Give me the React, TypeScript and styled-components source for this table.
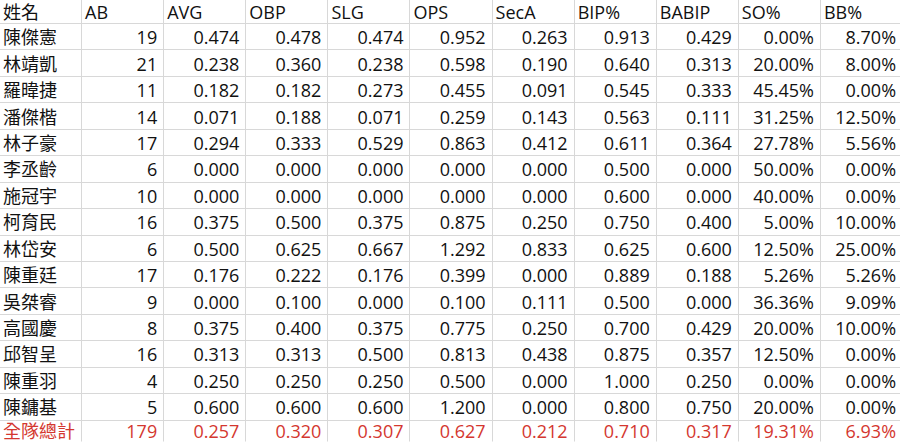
import React from 'react'
import styled, { createGlobalStyle } from 'styled-components'

const GlobalStyle = createGlobalStyle`
  html, body {
    margin: 0;
    padding: 0;
    background: #ffffff;
    overflow: hidden;
  }
`

const Sheet = styled.div`
  width: 900px;
  height: 442px;
  overflow: hidden;
  font-family: "Open Sans", "Noto Sans CJK TC", sans-serif;
  font-size: 18px;
  color: #111111;
`

const Row = styled.div<{ $header?: boolean; $total?: boolean }>`
  display: grid;
  grid-template-columns: repeat(11, 82.1px);
  height: ${p => (p.$header ? '24px' : p.$total ? '21px' : '26.45px')};
  color: ${p => (p.$total ? '#d4372f' : 'inherit')};
`

const Cell = styled.div<{ $right?: boolean; $last?: boolean }>`
  box-sizing: border-box;
  display: flex;
  align-items: center;
  justify-content: ${p => (p.$right ? 'flex-end' : 'flex-start')};
  padding: 1px ${p => (p.$right ? '6px' : '0')} 0 ${p => (p.$right ? '0' : '3px')};
  border-right: 1px solid #d8d8d8;
  border-bottom: 1px solid ${p => (p.$last ? 'transparent' : '#d8d8d8')};
  white-space: nowrap;
  line-height: 1;
`

const headers = ['姓名', 'AB', 'AVG', 'OBP', 'SLG', 'OPS', 'SecA', 'BIP%', 'BABIP', 'SO%', 'BB%']

const players: string[][] = [
  ['陳傑憲', '19', '0.474', '0.478', '0.474', '0.952', '0.263', '0.913', '0.429', '0.00%', '8.70%'],
  ['林靖凱', '21', '0.238', '0.360', '0.238', '0.598', '0.190', '0.640', '0.313', '20.00%', '8.00%'],
  ['羅暐捷', '11', '0.182', '0.182', '0.273', '0.455', '0.091', '0.545', '0.333', '45.45%', '0.00%'],
  ['潘傑楷', '14', '0.071', '0.188', '0.071', '0.259', '0.143', '0.563', '0.111', '31.25%', '12.50%'],
  ['林子豪', '17', '0.294', '0.333', '0.529', '0.863', '0.412', '0.611', '0.364', '27.78%', '5.56%'],
  ['李丞齡', '6', '0.000', '0.000', '0.000', '0.000', '0.000', '0.500', '0.000', '50.00%', '0.00%'],
  ['施冠宇', '10', '0.000', '0.000', '0.000', '0.000', '0.000', '0.600', '0.000', '40.00%', '0.00%'],
  ['柯育民', '16', '0.375', '0.500', '0.375', '0.875', '0.250', '0.750', '0.400', '5.00%', '10.00%'],
  ['林岱安', '6', '0.500', '0.625', '0.667', '1.292', '0.833', '0.625', '0.600', '12.50%', '25.00%'],
  ['陳重廷', '17', '0.176', '0.222', '0.176', '0.399', '0.000', '0.889', '0.188', '5.26%', '5.26%'],
  ['吳桀睿', '9', '0.000', '0.100', '0.000', '0.100', '0.111', '0.500', '0.000', '36.36%', '9.09%'],
  ['高國慶', '8', '0.375', '0.400', '0.375', '0.775', '0.250', '0.700', '0.429', '20.00%', '10.00%'],
  ['邱智呈', '16', '0.313', '0.313', '0.500', '0.813', '0.438', '0.875', '0.357', '12.50%', '0.00%'],
  ['陳重羽', '4', '0.250', '0.250', '0.250', '0.500', '0.000', '1.000', '0.250', '0.00%', '0.00%'],
  ['陳鏞基', '5', '0.600', '0.600', '0.600', '1.200', '0.000', '0.800', '0.750', '20.00%', '0.00%'],
]

const total = ['全隊總計', '179', '0.257', '0.320', '0.307', '0.627', '0.212', '0.710', '0.317', '19.31%', '6.93%']

const StatRow: React.FC<{ cells: string[]; total?: boolean }> = ({ cells, total }) => (
  <Row $total={total}>
    {cells.map((c, i) => (
      <Cell key={i} $right={i > 0} $last={total}>{c}</Cell>
    ))}
  </Row>
)

export default function App() {
  return (
    <>
      <GlobalStyle />
      <Sheet>
        <Row $header>
          {headers.map(h => (
            <Cell key={h}>{h}</Cell>
          ))}
        </Row>
        {players.map(p => (
          <StatRow key={p[0]} cells={p} />
        ))}
        <StatRow cells={total} total />
      </Sheet>
    </>
  )
}
